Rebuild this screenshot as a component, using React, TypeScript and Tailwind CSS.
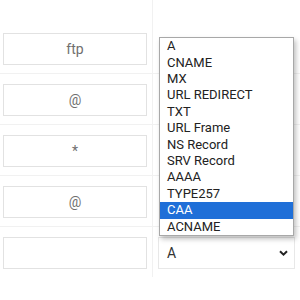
import React from "react";

const hosts = ["ftp", "@", "*", "@", ""];

const options = [
  "A",
  "CNAME",
  "MX",
  "URL REDIRECT",
  "TXT",
  "URL Frame",
  "NS Record",
  "SRV Record",
  "AAAA",
  "TYPE257",
  "CAA",
  "ACNAME",
];

const Chevron = () => (
  <svg width="9" height="6" viewBox="0 0 9 6" fill="none">
    <path d="M1 1.2 L4.5 4.6 L8 1.2" stroke="#222" strokeWidth="2" />
  </svg>
);

function Dropdown() {
  return (
    <div className="absolute bottom-full left-[1px] right-[1px] mb-[1px] bg-white border border-[#a8a8a8] shadow-[2px_3px_5px_rgba(0,0,0,0.25)] py-0">
      {options.map((o) => (
        <div
          key={o}
          className={`h-[16.4px] leading-[16.4px] pl-[7px] text-[13px] ${
            o === "CAA" ? "bg-[#1f6fd8] text-white" : "text-[#222]"
          }`}
        >
          {o}
        </div>
      ))}
    </div>
  );
}

export default function App() {
  return (
    <div className="w-[300px] h-[300px] bg-white overflow-hidden font-['Roboto',sans-serif]">
      {hosts.map((h, i) => (
        <div
          key={i}
          className={`grid grid-cols-[152px_1fr] ${i < hosts.length - 1 ? "border-b border-[#f1f1f1]" : ""}`}
        >
          <div className={`pl-[3px] pr-[5px] pb-[8px] ${i === 0 ? "pt-[33px]" : "pt-[10px]"}`}>
            <div className="h-[32px] border border-[#e2e2e2] flex items-center justify-center text-[14px] text-[#6f6f6f]">
              {h}
            </div>
          </div>
          <div
            className={`border-l border-[#f1f1f1] pl-[5px] pr-[5px] pb-[8px] ${i === 0 ? "pt-[33px]" : "pt-[10px]"}`}
          >
            {i === hosts.length - 1 ? (
              <div className="relative">
                <Dropdown />
                <div className="h-[32px] border border-[#e8e8e8] flex items-center justify-between pl-[8px] pr-[6px] text-[14px] text-[#333]">
                  <span>A</span>
                  <Chevron />
                </div>
              </div>
            ) : (
              <div className="h-[32px]" />
            )}
          </div>
        </div>
      ))}
    </div>
  );
}
